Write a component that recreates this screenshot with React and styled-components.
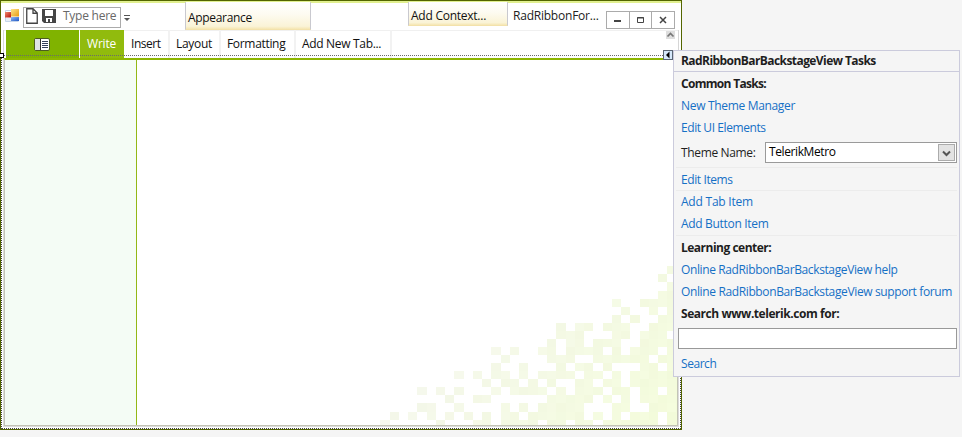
import React from 'react';
import styled, { createGlobalStyle } from 'styled-components';

const Global = createGlobalStyle`
  * { box-sizing: border-box; }
  body { margin: 0; background: #f5f5f5; font: 12px/16px "Open Sans", "Noto Sans", sans-serif; color: #1e1e1e; overflow: hidden; }
`;

const Label = styled.span`
  display: inline-block;
  white-space: nowrap;
  font-size: 12px;
  line-height: 16px;
  letter-spacing: ${(p) => p.$track || -0.32}px;
  font-weight: ${(p) => (p.$bold ? 700 : 400)};
`;

const Desktop = styled.div`
  position: relative;
  width: 962px;
  height: 437px;
  background: #f5f5f5;
`;

const Form = styled.div`
  display: flex;
  flex-direction: column;
  width: 682px;
  height: 430px;
  border: 1px solid #536500;
  background: #fff;
`;

const TitleBar = styled.header`
  display: flex;
  align-items: flex-start;
  height: 29px;
  flex: none;
  border-top: 2px solid #e1f08f;
  padding-left: 4px;
`;

const AppIcon = styled.svg`
  width: 14px;
  height: 14px;
  margin-top: 5px;
  flex: none;
`;

const QuickAccess = styled.div`
  display: flex;
  align-items: flex-start;
  width: 98px;
  height: 21px;
  margin: 4px 0 0 4px;
  border: 1px solid #ababab;
  padding-left: 2px;
  color: #686868;
  flex: none;
`;

const ToolIcon = styled.svg`
  width: ${(p) => p.$w}px;
  height: 16px;
  margin-right: ${(p) => p.$gap}px;
  flex: none;
`;

const Overflow = styled.svg`
  width: 6px;
  height: 7px;
  margin: 12px 0 0 3px;
  flex: none;
`;

const ContextTab = styled.div`
  width: ${(p) => p.$w}px;
  height: ${(p) => p.$h}px;
  margin: -1px 0 0 ${(p) => p.$left}px;
  padding: ${(p) => p.$top}px 0 0 2px;
  border: solid #c9c9cf;
  border-width: 0 1px;
  border-bottom: 1px solid #f3e2ab;
  background: linear-gradient(#ffffff, #fdfbf1 45%, #faf3d6 90%, #f5e6b2);
  color: #111;
  flex: none;
`;

const Caption = styled.div`
  width: 93px;
  margin: 5px 0 0 5px;
  color: #222;
  flex: none;
`;

const WindowButtons = styled.div`
  display: flex;
  width: 69px;
  height: 18px;
  margin-top: 8px;
  border: 1px solid #ababab;
  flex: none;
`;

const WindowButton = styled.button`
  flex: 1;
  display: flex;
  align-items: center;
  justify-content: center;
  padding: 0;
  background: #fff;
  border: 0;
  & + & { border-left: 1px solid #ababab; }
`;

const Ribbon = styled.nav`
  position: relative;
  display: flex;
  height: 28px;
  margin: 0 2px;
  padding-left: 2px;
  border: solid #d6d6d6;
  border-width: 0 1px;
  box-shadow: inset 0 1px #f0f0f0;
  flex: none;
`;

const FileButton = styled.button`
  display: flex;
  align-items: center;
  justify-content: center;
  width: 73px;
  height: 28px;
  border: 0;
  padding: 0 1px 0 0;
  background: #80b300;
  flex: none;
`;

const Tab = styled.div`
  width: ${(p) => p.$w}px;
  height: 28px;
  padding: 6px 0 0 ${(p) => p.$pad || 6}px;
  margin-left: ${(p) => (p.$active ? 1 : 0)}px;
  border-right: ${(p) => (p.$active ? 0 : 2)}px solid #f2f2f2;
  background: ${(p) => (p.$active ? '#91bb0d' : 'transparent')};
  color: ${(p) => (p.$active ? '#fff' : '#111')};
  flex: none;
`;

const SelectionLine = styled.div`
  position: absolute;
  left: 0;
  right: 14px;
  top: 25px;
  height: 1px;
  background: repeating-linear-gradient(90deg, #6b6b6b 0 1px, transparent 1px 2px);
`;

const CollapseIcon = styled.svg`
  width: 9px;
  height: 8px;
  margin-top: 1px;
  margin-left: auto;
  margin-right: 3px;
  flex: none;
`;

const Frame = styled.div`
  flex: 1;
  display: flex;
  min-height: 0;
  border: 1px dotted #444;
  border-left-width: 1px;
  border-top: 0;
  padding: 0 2px 2px 2px;
`;

const Backstage = styled.main`
  flex: 1;
  display: flex;
  border: 1px solid #c3c4b6;
  border-top: 2px solid #8db600;
  box-shadow: 0 0 0 1px #dcdcdc;
  clip-path: inset(0 -1px -1px -1px);
`;

const Sidebar = styled.aside`
  width: 132px;
  border-right: 1px solid #93b817;
  background: #f4fcf5;
  flex: none;
`;

const Canvas = styled.section`
  flex: 1;
  display: flex;
  justify-content: flex-end;
  align-items: flex-end;
  background: #fff;
`;

const Mosaic = styled.svg`
  width: 297px;
  height: 159px;
  flex: none;
`;

const Handle = styled.div`
  position: absolute;
  left: 0;
  top: 53px;
  width: 4px;
  height: 5px;
  border: 1px solid #000;
  border-left: 0;
  background: #fff;
`;

const SmartTag = styled.svg`
  position: absolute;
  left: 663px;
  top: 50px;
  width: 10px;
  height: 10px;
`;

const Panel = styled.section`
  position: absolute;
  left: 673px;
  top: 50px;
  width: 287px;
  height: 327px;
  border: 1px solid #cbcbdc;
  background: #f5f5f5;
`;

const PanelTitle = styled.h1`
  height: 21px;
  margin: 0;
  padding: 2px 0 0 7px;
  border-bottom: 1px solid #cbcbdc;
  font-size: 12px;
  line-height: 16px;
`;

const Group = styled.div`
  display: flex;
  flex-direction: column;
  margin: 0 2px;
  padding-top: ${(p) => p.$top || 0}px;
  height: ${(p) => p.$h}px;
  border-bottom: ${(p) => (p.$last ? 0 : 1)}px solid #ececec;
`;

const Row = styled.div`
  display: flex;
  align-items: center;
  height: ${(p) => p.$h || 22}px;
  padding-left: 5px;
  flex: none;
`;

const Link = styled.a`
  color: #1570c5;
`;

const Select = styled.div`
  display: flex;
  width: 192px;
  height: 21px;
  margin-left: auto;
  border: 1px solid #9a9a9a;
  background: #fff;
  padding: 1px 1px 1px 3px;
  color: #000;
`;

const DropButton = styled.button`
  display: flex;
  align-items: center;
  justify-content: center;
  width: 17px;
  height: 17px;
  margin-left: auto;
  padding: 1px 0 0;
  border: 1px solid #ababab;
  background: #e3e3e3;
`;

const SearchInput = styled.input`
  width: 279px;
  height: 21px;
  margin: 3px 0 4px 2px;
  border: 1px solid #999;
  background: #fff;
  flex: none;
`;

const cells = [
  [31], [30], [31], [30, 31], [25, 28, 29, 30, 31], [26, 29, 31], [25, 27, 30, 31],
  [19, 21, 22, 24, 25, 26, 29, 30, 31],
  [19, 20, 21, 25, 26, 28, 29, 30],
  [18, 20, 21, 23, 24, 25, 28, 29, 30, 31],
  [17, 18, 20, 21, 22, 23, 25, 27, 28, 29, 31, 12, 14],
  [13, 18, 19, 20, 23, 24, 25, 26, 27, 28, 30, 31],
  [12, 15, 19, 21, 22, 24, 28, 29, 31],
  [8, 10, 12, 13, 15, 17, 18, 19, 20, 22, 23, 25, 27, 28, 29, 30, 31],
  [11, 13, 14, 16, 18, 21, 22, 24, 25, 27, 28, 29, 30, 31],
  [4, 6, 8, 12, 14, 15, 16, 17, 19, 21, 22, 23, 25, 26, 28, 29, 31],
  [7, 10, 11, 18, 19, 20, 21, 22, 24, 26, 28, 29, 30, 31],
  [4, 5, 8, 13, 15, 17, 18, 19, 20, 21, 25, 26, 29, 30, 31],
  [1, 3, 5, 7, 9, 11, 13, 14, 16, 17, 18, 19, 20, 21, 23, 25, 27, 28, 29, 31],
  [0, 6, 10, 11, 13, 14, 15, 16, 18, 19, 21, 22, 24, 25, 26, 27, 28, 29, 31],
];

function shade(c, r) {
  const t = Math.min(1, Math.max(0, (c / 31) * 0.7 + (r / 19) * 0.3 - 0.2));
  const n = ((c * 7 + r * 11) % 5) - 2;
  return `rgb(${Math.round(245 - 2 * t + n * 0.6)}, ${Math.round(247 + 6 * t + n * 0.5)}, ${Math.round(238 - 24 * t + n)})`;
}

function Pixels() {
  return (
    <Mosaic viewBox="380 266 297 159">
      {cells.map((row, r) =>
        row.map((c) => (
          <rect
            key={`${r}-${c}`}
            x={Math.round(380.3 + 9.26 * c)}
            y={Math.round(266.3 + 8.07 * r)}
            width={Math.round(380.3 + 9.26 * (c + 1)) - Math.round(380.3 + 9.26 * c)}
            height={Math.round(266.3 + 8.07 * (r + 1)) - Math.round(266.3 + 8.07 * r)}
            fill={shade(c, r)}
          />
        ))
      )}
      <rect x="676" y="347" width="1" height="73" fill="#f3fcda" />
    </Mosaic>
  );
}

function LinkRow({ children, h, track }) {
  return (
    <Row $h={h}>
      <Link><Label $track={track}>{children}</Label></Link>
    </Row>
  );
}

export default function App() {
  return (
    <Desktop>
      <Global />
      <Form>
        <TitleBar>
          <AppIcon viewBox="0 0 14 14">
            <defs>
              <linearGradient id="r" x2="1" y2="1"><stop stopColor="#f08a70" /><stop offset="1" stopColor="#b80f0a" /></linearGradient>
              <linearGradient id="y" x2="1" y2="1"><stop stopColor="#ffe58a" /><stop offset="1" stopColor="#e89a10" /></linearGradient>
              <linearGradient id="b" x2="1" y2="1"><stop stopColor="#8fb9f5" /><stop offset="1" stopColor="#2258c4" /></linearGradient>
            </defs>
            <path d="M.5 2.500H6M.5 2.500V13.500H13.500" fill="none" stroke="#c4d4ea" />
            <rect x="6" y="1" width="8" height="7.500" fill="url(#y)" />
            <rect x="0" y="4" width="6" height="5.500" fill="url(#r)" />
            <rect x="6" y="9" width="8" height="4" fill="url(#b)" />
            <rect x="1" y="10" width="5" height="3" fill="#e8edf5" />
          </AppIcon>
          <QuickAccess>
            <ToolIcon $w={12} $gap={4} viewBox="0 0 12 16">
              <path d="M.75 .75H7L11.250 5V15.250H.75ZM7 .75V5.250H11.250" fill="#fff" stroke="#444" strokeWidth="1.300" />
            </ToolIcon>
            <ToolIcon $w={14} $gap={7} viewBox="0 0 14 16">
              <path d="M0 1H14V15H2L0 13Z" fill="#464646" />
              <path d="M3 2H11V8H3ZM4 10H10V14H8V11H6V14H4Z" fill="#fff" />
            </ToolIcon>
            <Label $track={-0.25}>Type here</Label>
          </QuickAccess>
          <Overflow viewBox="0 0 6 7"><path d="M0 .5H6" stroke="#555" /><path d="M0 3H6L3 6Z" fill="#555" /></Overflow>
          <ContextTab $left={55} $w={126} $h={28} $top={8}><Label>Appearance</Label></ContextTab>
          <ContextTab $left={97} $w={100} $h={24} $top={6}><Label $track={-0.25}>Add Context...</Label></ContextTab>
          <Caption><Label $track={-0.22}>RadRibbonFor...</Label></Caption>
          <WindowButtons>
            <WindowButton><svg width="8" height="8"><path d="M0 5H7" stroke="#444" strokeWidth="2" /></svg></WindowButton>
            <WindowButton><svg width="8" height="8"><path d="M.5 1.500H6.500V6.500H.5Z M0 2H7" fill="none" stroke="#444" /></svg></WindowButton>
            <WindowButton><svg width="8" height="8"><path d="M1 1L7 7M7 1L1 7" stroke="#444" strokeWidth="1.500" /></svg></WindowButton>
          </WindowButtons>
        </TitleBar>
        <Ribbon>
          <FileButton>
            <svg width="16" height="13" viewBox="0 0 16 13">
              <rect x=".5" y=".5" width="15" height="12" rx="1.500" fill="#fff" stroke="#4c5c20" />
              <rect x="1" y="1" width="5" height="11" fill="#dfe3e4" />
              <path d="M6.500 1V12" stroke="#333" />
              <path d="M8 3.500H14M8 5.500H14M8 7.500H14M8 9.500H14" stroke="#35405a" />
            </svg>
          </FileButton>
          <Tab $active $w={44} $pad={7}><Label $track={-0.2}>Write</Label></Tab>
          <Tab $w={46} $pad={7}><Label $track={-0.45}>Insert</Label></Tab>
          <Tab $w={51}><Label>Layout</Label></Tab>
          <Tab $w={75}><Label>Formatting</Label></Tab>
          <Tab $w={96}><Label>Add New Tab...</Label></Tab>
          <CollapseIcon viewBox="0 0 9 8"><rect width="9" height="8" fill="#dedede" /><path d="M1.500 5.500L4.500 2.500L7.500 5.500" fill="none" stroke="#777" strokeWidth="1.700" /></CollapseIcon>
          <SelectionLine />
        </Ribbon>
        <Frame>
          <Backstage>
            <Sidebar />
            <Canvas><Pixels /></Canvas>
          </Backstage>
        </Frame>
      </Form>
      <Handle />
      <SmartTag viewBox="0 0 10 10"><rect x=".5" y=".5" width="9" height="9" fill="#d5e8fa" stroke="#5a6673" /><path d="M6.500 1.500V8.500L3 5Z" fill="#000" /></SmartTag>
      <Panel>
        <PanelTitle><Label $bold $track={-0.57}>RadRibbonBarBackstageView Tasks</Label></PanelTitle>
        <Group $h={96} $top={1}>
          <Row><Label $bold $track={-0.7}>Common Tasks:</Label></Row>
          <LinkRow>New Theme Manager</LinkRow>
          <LinkRow track={-0.42}>Edit UI Elements</LinkRow>
          <Row $h={27}>
            <Label $track={-0.35}>Theme Name:</Label>
            <Select>
              <Label $track={-0.4}>TelerikMetro</Label>
              <DropButton><svg width="9" height="7"><path d="M1 1.500L4.500 5L8 1.500" fill="none" stroke="#555" strokeWidth="2" /></svg></DropButton>
            </Select>
          </Row>
        </Group>
        <Group $h={23}><LinkRow h={23} track={-0.4}>Edit Items</LinkRow></Group>
        <Group $h={45}>
          <LinkRow track={-0.22}>Add Tab Item</LinkRow>
          <LinkRow>Add Button Item</LinkRow>
        </Group>
        <Group $h={139} $last>
          <Row $h={23}><Label $bold $track={-0.5}>Learning center:</Label></Row>
          <LinkRow track={-0.38}>Online RadRibbonBarBackstageView help</LinkRow>
          <LinkRow track={-0.37}>Online RadRibbonBarBackstageView support forum</LinkRow>
          <Row><Label $bold $track={-0.45}>Search www.telerik.com for:</Label></Row>
          <SearchInput aria-label="Search" />
          <LinkRow track={-0.45}>Search</LinkRow>
        </Group>
      </Panel>
    </Desktop>
  );
}
